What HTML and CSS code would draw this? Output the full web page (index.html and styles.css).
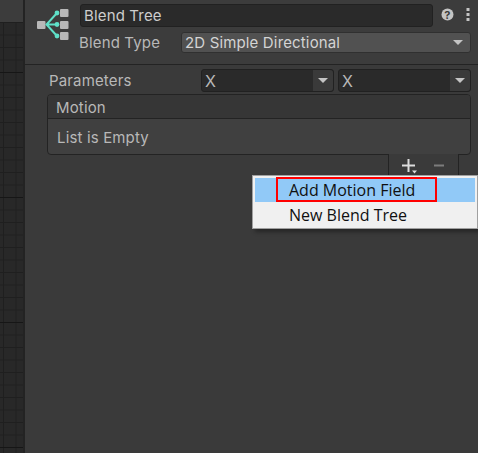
FILE: index.html
```html
<!DOCTYPE html>
<html lang="en">
<head>
  <meta charset="UTF-8">
  <title>Blend Tree</title>
  <link rel="stylesheet" href="styles.css">
</head>
<body>
  <div class="graph">
    <div class="graph-bar"></div>
    <div class="graph-grid"></div>
  </div>

  <div class="inspector">
    <div class="head">
      <svg class="tree-icon" width="32" height="32" viewBox="0 0 32 32">
        <rect x="0" y="12" width="8.5" height="8" rx="1" fill="#b8b8b8"/>
        <rect x="23" y="0" width="8.5" height="8" rx="1" fill="#b8b8b8"/>
        <rect x="23" y="12" width="8.5" height="8" rx="1" fill="#b8b8b8"/>
        <rect x="23" y="23" width="8.5" height="8" rx="1" fill="#b8b8b8"/>
        <path d="M9 15.5H20M20 4L9.5 15.5L20 27" fill="none" stroke="#5fe0c8" stroke-width="2"/>
        <circle cx="20" cy="4" r="2.4" fill="#5fe0c8"/>
        <circle cx="20" cy="15.5" r="2.4" fill="#5fe0c8"/>
        <circle cx="20" cy="27" r="2.4" fill="#5fe0c8"/>
      </svg>
      <div class="head-fields">
        <div class="name-row">
          <div class="name-field">Blend Tree</div>
          <svg class="help" width="13" height="13" viewBox="0 0 13 13">
            <circle cx="6.5" cy="6.5" r="6" fill="#c4c4c4"/>
            <text x="6.5" y="10.5" text-anchor="middle" class="help-mark">?</text>
          </svg>
          <svg class="dots" width="4" height="13" viewBox="0 0 4 13">
            <rect x="0.5" y="0" width="3" height="3" fill="#c4c4c4"/>
            <rect x="0.5" y="5" width="3" height="3" fill="#c4c4c4"/>
            <rect x="0.5" y="10" width="3" height="3" fill="#c4c4c4"/>
          </svg>
        </div>
        <div class="type-row">
          <span class="type-label">Blend Type</span>
          <div class="type-select">
            <span>2D Simple Directional</span>
            <i class="arrow"></i>
          </div>
        </div>
      </div>
    </div>

    <div class="body">
      <div class="param-row">
        <span class="param-label">Parameters</span>
        <div class="param-select"><span>X</span><b><i class="arrow"></i></b></div>
        <div class="param-select"><span>X</span><b><i class="arrow"></i></b></div>
      </div>

      <div class="motion-list">
        <div class="motion-head">Motion</div>
        <div class="motion-empty">List is Empty</div>
      </div>

      <div class="list-foot">
        <div class="foot-tab">
          <svg class="plus" width="15" height="15" viewBox="0 0 15 15">
            <path d="M6.5 0V13M0 6.5H13" stroke="#dcdcdc" stroke-width="2" fill="none"/>
            <path d="M10 11.5H15L12.5 14.5Z" fill="#dcdcdc"/>
          </svg>
          <svg class="minus" width="10" height="15" viewBox="0 0 10 15">
            <path d="M0 6.5H10" stroke="#7c7c7c" stroke-width="2" fill="none"/>
          </svg>
        </div>
      </div>
    </div>

    <div class="menu">
      <div class="menu-item active"><span class="mark">Add Motion Field</span></div>
      <div class="menu-item"><span class="mark plain">New Blend Tree</span></div>
    </div>
  </div>
</body>
</html>
```

FILE: styles.css
```css
html, body {
  height: 100%;
  margin: 0;
  padding: 0;
  overflow: hidden;
}

body {
  display: flex;
  background: #3a3a3a;
  font-family: "Inter", "Liberation Sans", sans-serif;
  font-size: 15px;
  letter-spacing: 0.15px;
  color: #b8b8b8;
}

.graph {
  width: 23px;
  flex: none;
  display: flex;
  flex-direction: column;
  border-right: 2px solid #232323;
}

.graph-bar {
  height: 22px;
  flex: none;
  background: #3c3c3c;
}

.graph-grid {
  flex: 1;
  background-color: #282828;
  background-image:
    linear-gradient(#161616 1px, transparent 1px),
    linear-gradient(#1f1f1f 1px, transparent 1px),
    linear-gradient(90deg, #1f1f1f 1px, transparent 1px);
  background-size: 100% 125px, 100% 12.5px, 12.5px 100%;
  background-position: 0 50px, 0 0, 3px 0;
}

.inspector {
  flex: 1;
  position: relative;
  display: flex;
  flex-direction: column;
  background: #3a3a3a;
}

/* header */
.head {
  height: 65px;
  flex: none;
  box-sizing: border-box;
  display: flex;
  gap: 11px;
  padding: 4px 7px 0 12px;
  border-bottom: 1px solid #232323;
  background: #3c3c3c;
}

.tree-icon {
  flex: none;
  margin-top: 5px;
}

.head-fields {
  flex: 1;
  display: flex;
  flex-direction: column;
  gap: 5px;
}

.name-row {
  display: flex;
  align-items: center;
  height: 23px;
}

.name-field {
  flex: 1;
  height: 23px;
  box-sizing: border-box;
  line-height: 22px;
  padding-left: 3px;
  background: #2a2a2a;
  border: 1px solid #212121;
  border-radius: 3px;
  color: #cdcdcd;
}

.help {
  margin-left: 8px;
  margin-top: -3px;
}

.dots {
  margin-left: 12px;
  margin-right: 1px;
  margin-top: -3px;
}

.help-mark {
  font-size: 11px;
  font-weight: bold;
  fill: #3c3c3c;
}

.type-row {
  display: flex;
  align-items: center;
  margin-left: -1px;
}

.type-label {
  width: 102px;
  flex: none;
}

.type-select {
  flex: 1;
  height: 21px;
  box-sizing: border-box;
  display: flex;
  align-items: center;
  justify-content: space-between;
  padding: 0 7px 0 3px;
  background: #515151;
  border: 1px solid #303030;
  border-radius: 3px;
  color: #d4d4d4;
}

.arrow {
  width: 0;
  height: 0;
  border-left: 5px solid transparent;
  border-right: 5px solid transparent;
  border-top: 5px solid #c4c4c4;
}

/* parameters and motion list */
.body {
  flex: 1;
  display: flex;
  flex-direction: column;
  padding: 4px 7px 0 22px;
}

.param-row {
  display: flex;
  align-items: center;
  gap: 4px;
  height: 23px;
  margin-left: 2px;
}

.param-label {
  width: 148px;
  flex: none;
}

.param-select {
  flex: 1;
  height: 23px;
  box-sizing: border-box;
  display: flex;
  align-items: center;
  justify-content: space-between;
  background: #2a2a2a;
  border: 1px solid #212121;
  border-radius: 3px;
}

.param-select span {
  padding-left: 3px;
  font-size: 16px;
}

.param-select b {
  width: 20px;
  height: 100%;
  display: flex;
  align-items: center;
  justify-content: center;
  background: #3a3a3a;
  border-radius: 0 3px 3px 0;
}

.motion-list {
  margin-top: 2px;
  height: 61px;
  box-sizing: border-box;
  background: #404040;
  border: 1px solid #232323;
  border-radius: 4px;
}

.motion-head {
  height: 24px;
  box-sizing: border-box;
  line-height: 26px;
  padding-left: 8px;
  background: #363636;
  border-bottom: 1px solid #232323;
  border-radius: 3px 3px 0 0;
}

.motion-empty {
  line-height: 38px;
  padding-left: 9px;
}

.list-foot {
  display: flex;
  justify-content: flex-end;
  padding-right: 12px;
}

.foot-tab {
  width: 71px;
  height: 32px;
  margin-top: -1px;
  box-sizing: border-box;
  display: flex;
  gap: 17px;
  padding: 5px 0 0 13px;
  background: #3a3a3a;
  border: 1px solid #232323;
  border-top: none;
  border-radius: 0 0 4px 4px;
}

/* popup menu */
.menu {
  position: absolute;
  left: 227px;
  top: 175px;
  width: 226px;
  height: 54px;
  box-sizing: border-box;
  padding: 2px;
  background: #f0f0f0;
  border: 1px solid #a0a0a0;
  box-shadow: 3px 3px 4px rgba(0, 0, 0, 0.35);
  font-family: "Open Sans", "Noto Sans", sans-serif;
  font-size: 16px;
  letter-spacing: 0;
  color: #101010;
}

.menu-item {
  height: 24px;
  line-height: 22px;
  padding-left: 21px;
}

.menu-item.active { background: #91c9f7; }

.mark {
  display: inline-block;
  box-sizing: border-box;
  width: 161px;
  height: 25px;
  padding-left: 11px;
  margin-top: -1px;
  border: 2px solid #ff0000;
  vertical-align: top;
}

.mark.plain {
  border-color: transparent;
  line-height: 24px;
}
```
